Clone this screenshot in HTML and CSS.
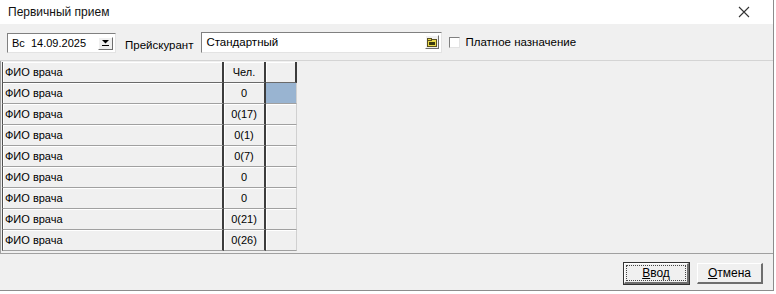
FILE: index.html
```html
<!DOCTYPE html>
<html lang="ru">
<head>
    <meta charset="UTF-8">
    <title>Первичный прием</title>
    <link rel="stylesheet" href="styles.css">
</head>
<body>
    <div class="window">
        <!-- Title bar -->
        <div class="titlebar">
            <span class="title">Первичный прием</span>
            <svg class="close" width="12" height="12" viewBox="0 0 12 12">
                <path d="M1 1 L11 11 M11 1 L1 11" stroke="#333" stroke-width="1.1" fill="none"/>
            </svg>
        </div>

        <!-- Toolbar -->
        <div class="toolbar">
            <div class="datebox">
                <span class="date-text">Вс&nbsp;&nbsp;14.09.2025</span>
                <span class="date-btn">
                    <svg width="7" height="6" viewBox="0 0 7 6">
                        <path d="M0 0 H7 L3.5 3.5 Z" fill="#000"/>
                        <rect x="0" y="5" width="7" height="1" fill="#000"/>
                    </svg>
                </span>
            </div>
            <span class="label">Прейскурант</span>
            <div class="combo">
                <span class="combo-text">Стандартный</span>
                <span class="combo-btn">
                    <svg width="10" height="9" viewBox="0 0 10 9">
                        <rect x="0.5" y="1.5" width="9" height="7" fill="#e8d84a" stroke="#5a5020"/>
                        <rect x="0.5" y="0.5" width="4" height="2" fill="#e8d84a" stroke="#5a5020"/>
                        <rect x="2" y="4" width="6" height="3" fill="#3a3a10"/>
                    </svg>
                </span>
            </div>
            <label class="check">
                <span class="checkbox"></span>
                Платное назначение
            </label>
        </div>

        <!-- Doctors grid -->
        <div class="grid-panel">
            <table class="grid">
                <tr class="head">
                    <td class="c-name">ФИО врача</td>
                    <td class="c-num">Чел.</td>
                    <td class="c-extra"></td>
                </tr>
                <tr>
                    <td class="c-name">ФИО врача</td>
                    <td class="c-num">0</td>
                    <td class="c-extra selected"></td>
                </tr>
                <tr>
                    <td class="c-name">ФИО врача</td>
                    <td class="c-num">0(17)</td>
                    <td class="c-extra"></td>
                </tr>
                <tr>
                    <td class="c-name">ФИО врача</td>
                    <td class="c-num">0(1)</td>
                    <td class="c-extra"></td>
                </tr>
                <tr>
                    <td class="c-name">ФИО врача</td>
                    <td class="c-num">0(7)</td>
                    <td class="c-extra"></td>
                </tr>
                <tr>
                    <td class="c-name">ФИО врача</td>
                    <td class="c-num">0</td>
                    <td class="c-extra"></td>
                </tr>
                <tr>
                    <td class="c-name">ФИО врача</td>
                    <td class="c-num">0</td>
                    <td class="c-extra"></td>
                </tr>
                <tr>
                    <td class="c-name">ФИО врача</td>
                    <td class="c-num">0(21)</td>
                    <td class="c-extra"></td>
                </tr>
                <tr>
                    <td class="c-name">ФИО врача</td>
                    <td class="c-num">0(26)</td>
                    <td class="c-extra"></td>
                </tr>
            </table>
        </div>

        <!-- Buttons -->
        <div class="footer">
            <button class="btn default"><span class="focus"><u>В</u>вод</span></button>
            <button class="btn"><span class="focus"><u>О</u>тмена</span></button>
        </div>
    </div>
</body>
</html>
```

FILE: styles.css
```css
/* General */
body {
    margin: 0;
    width: 776px;
    height: 294px;
    background: #fff;
    font-family: 'Liberation Sans', Arial, sans-serif;
    font-size: 11px;
    color: #000;
    overflow: hidden;
}

.window {
    width: 773px;
    height: 290px;
    background: #f0f0f0;
    border-right: 1px solid #8c8c8c;
    border-bottom: 1px solid #8c8c8c;
    display: flex;
    flex-direction: column;
}

/* Title bar */
.titlebar {
    height: 24px;
    background: #fff;
    display: flex;
    align-items: center;
    padding: 0 23px 0 8px;
}

.title {
    font-size: 12px;
    flex: 1;
    color: #111;
}

/* Toolbar */
.toolbar {
    height: 37px;
    display: flex;
    align-items: center;
    padding-left: 7px;
    box-sizing: border-box;
    border-bottom: 1px solid #d4d4d4;
    font-size: 11.5px;
}

.datebox {
    width: 109px;
    height: 20px;
    box-sizing: border-box;
    background: #fff;
    border-top: 1px solid #808080;
    border-left: 1px solid #808080;
    border-bottom: 1px solid #e3e3e3;
    border-right: 1px solid #e3e3e3;
    display: flex;
    align-items: center;
    justify-content: space-between;
    padding: 0 2px 0 4px;
    margin-top: 2px;
    font-size: 11px;
}

.date-btn {
    width: 13px;
    height: 11px;
    background: #f0f0f0;
    border-top: 1px solid #fff;
    border-left: 1px solid #fff;
    border-right: 1px solid #6e6e6e;
    border-bottom: 1px solid #6e6e6e;
    display: flex;
    align-items: center;
    justify-content: center;
}

.label {
    margin: 6px 0 0 9px;
}

.combo {
    width: 241px;
    height: 21px;
    box-sizing: border-box;
    margin-left: 8px;
    background: #fff;
    border-top: 1px solid #808080;
    border-left: 1px solid #808080;
    border-bottom: 1px solid #e3e3e3;
    border-right: 1px solid #e3e3e3;
    display: flex;
    align-items: center;
    justify-content: space-between;
    padding: 0 2px 0 4px;
}

.combo-btn {
    width: 14px;
    height: 14px;
    box-sizing: border-box;
    background: #f0f0f0;
    border-top: 1px solid #fff;
    border-left: 1px solid #fff;
    border-right: 1px solid #6e6e6e;
    border-bottom: 1px solid #6e6e6e;
    display: flex;
    align-items: center;
    justify-content: center;
}

.check {
    display: flex;
    align-items: center;
    margin-left: 7px;
}

.checkbox {
    width: 11px;
    height: 11px;
    box-sizing: border-box;
    background: #fff;
    border-top: 1px solid #808080;
    border-left: 1px solid #808080;
    border-right: 1px solid #e3e3e3;
    border-bottom: 1px solid #e3e3e3;
    margin-right: 5px;
}

/* Grid */
.grid-panel {
    height: 193px;
    box-sizing: border-box;
    padding: 1px 0 0 1px;
    border-bottom: 1px solid #a0a0a0;
    border-left: 1px solid #a0a0a0;
    background: #f0f0f0;
}

.grid {
    border-collapse: separate;
    border-spacing: 0;
}

.grid td {
    height: 21px;
    box-sizing: border-box;
    padding: 0 3px;
    background: #f0f0f0;
    border-right: 1px solid #a0a0a0;
    border-bottom: 1px solid #a0a0a0;
    box-shadow: inset 1px 1px #fff;
    white-space: nowrap;
}

.grid .c-name {
    width: 222px;
    padding-left: 2px;
    border-left: 1px solid #505050;
    border-right: 2px solid #3c3c3c;
}

.grid .c-num {
    width: 42px;
    text-align: center;
    border-right: 2px solid #3c3c3c;
}

.grid .c-extra {
    width: 31px;
    border-right: 1px solid #d0d0d0;
}

.grid .head td {
    border-bottom: 1px solid #6a6a6a;
}

.grid .head .c-extra {
    border-right: 2px solid #3c3c3c;
}

.grid .selected {
    background: #99b4d1;
    box-shadow: none;
}

/* Footer */
.footer {
    flex: 1;
    display: flex;
    justify-content: flex-end;
    align-items: center;
    gap: 8px;
    padding-right: 10px;
}

.btn {
    width: 66px;
    height: 21px;
    box-sizing: border-box;
    background: #f0f0f0;
    border-top: 1px solid #fff;
    border-left: 1px solid #fff;
    border-right: 2px solid #6e6e6e;
    border-bottom: 2px solid #6e6e6e;
    font-family: 'Liberation Sans', Arial, sans-serif;
    font-size: 12px;
    padding: 1px;
    margin-top: 2px;
}

.btn .focus {
    display: flex;
    height: 100%;
    align-items: center;
    justify-content: center;
    box-sizing: border-box;
    border: 1px solid transparent;
}

.btn.default {
    width: 65px;
    outline: 1px solid #333;
}

.btn.default .focus {
    border: 1px dotted #444;
}
```
